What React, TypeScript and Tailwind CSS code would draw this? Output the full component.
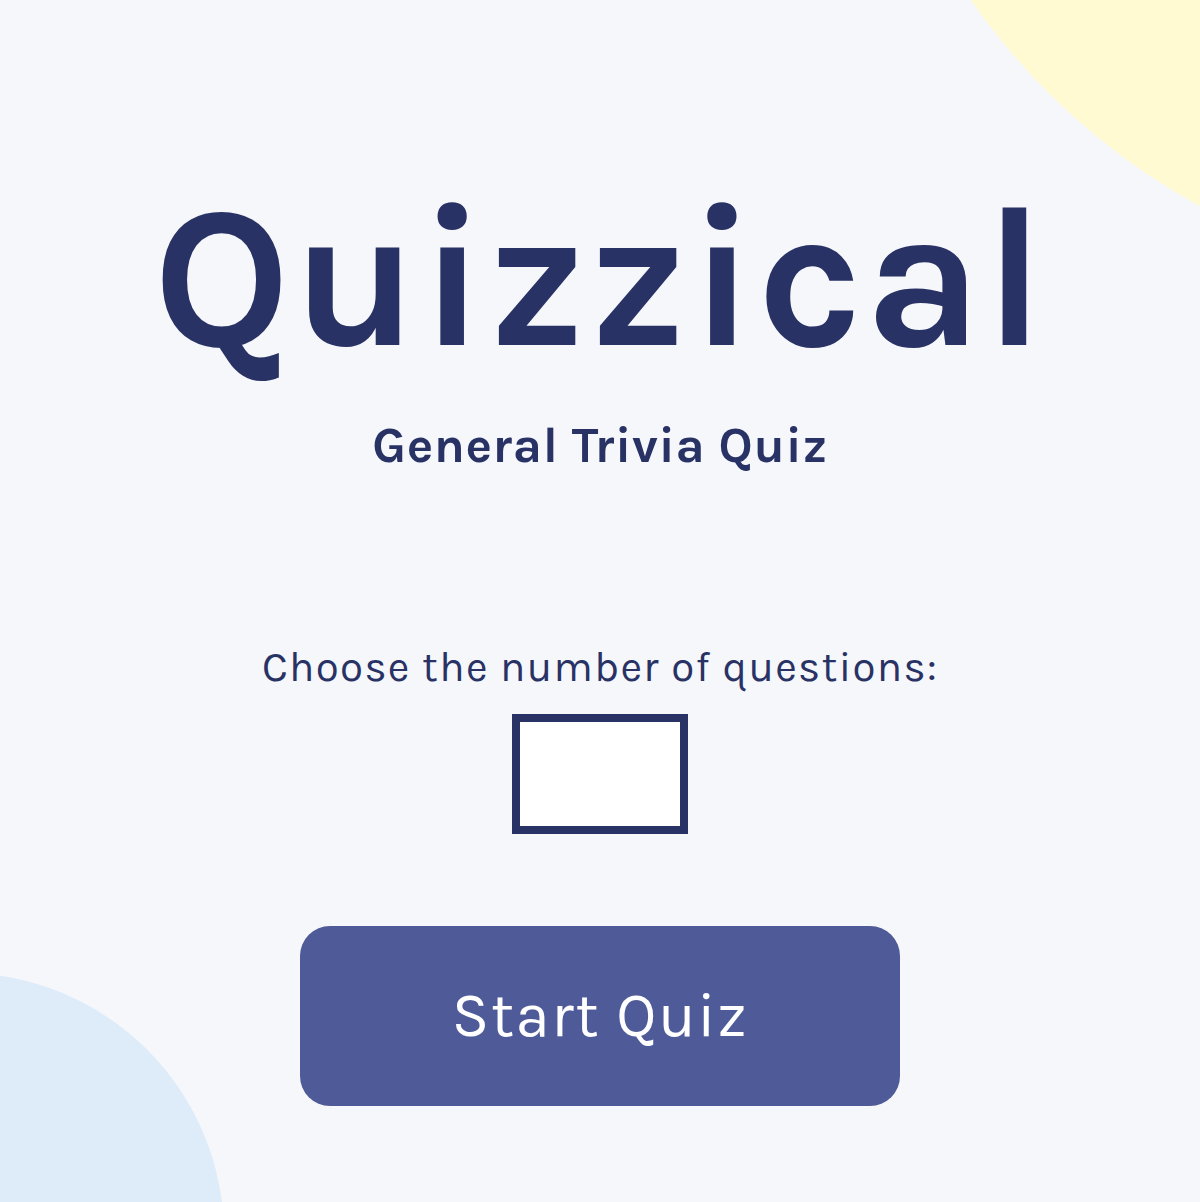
export default function App() {
  return (
    <main
      className="relative h-[1202px] w-full overflow-hidden bg-[#F5F7FB] text-[#293264]"
      style={{ fontFamily: '"Karla", Inter, "Noto Sans", sans-serif' }}
    >
      {/* decorative blobs */}
      <div className="absolute left-[851px] top-[-1055px] h-[1344px] w-[1344px] rounded-full bg-[#FFFAD1]" />
      <div className="absolute left-[-300px] top-[973px] h-[524px] w-[524px] rounded-full bg-[#DEEBF8]" />

      <div className="relative flex flex-col items-center pt-[179px]">
        <h1 className="text-[200px] font-bold leading-none tracking-[0.01em]">Quizzical</h1>
        <h2 className="mt-[42px] text-[50px] font-bold leading-none tracking-[0.012em]">
          General Trivia Quiz
        </h2>

        <label htmlFor="count" className="mt-[175px] text-[42px] leading-none tracking-[0.032em]">
          Choose the number of questions:
        </label>
        <input
          id="count"
          type="number"
          className="mt-[26px] h-[120px] w-[176px] border-[8px] border-[#293264] bg-white text-center text-[40px] outline-none"
        />

        <button className="mt-[92px] flex h-[180px] w-[600px] items-center justify-center rounded-[30px] bg-[#4F5B99] text-[62px] leading-none tracking-[0.025em] text-white">
          Start Quiz
        </button>
      </div>
    </main>
  );
}
